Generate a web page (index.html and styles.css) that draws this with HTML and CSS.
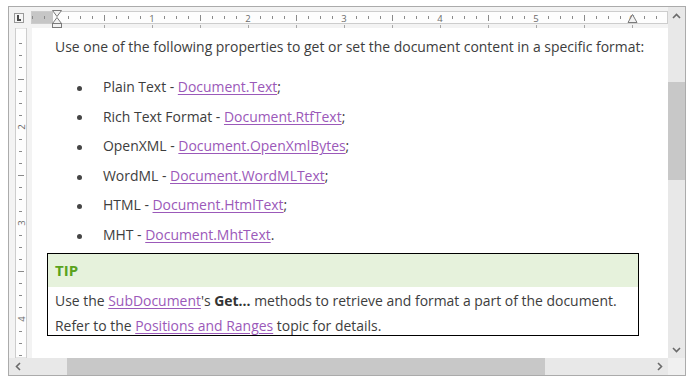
FILE: index.html
```html
<!DOCTYPE html>
<html lang="en">
<head>
<meta charset="UTF-8">
<meta name="viewport" content="width=device-width, initial-scale=1.0">
<link rel="stylesheet" href="styles.css">
<title>Rich Edit Control</title>
</head>
<body>

<div class="editor">

<div class="workspace">

<div class="tabType"><span class="tabL"></span></div>

<svg class="hRuler" width="637" height="21" viewBox="0 0 637 21">
  <defs>
    <pattern id="hTicks" patternUnits="userSpaceOnUse" x="25" y="0" width="96" height="21">
      <g stroke="#8a8a8a" stroke-width="1">
        <line x1="12.5" y1="9" x2="12.5" y2="12"/>
        <line x1="24.5" y1="9" x2="24.5" y2="12"/>
        <line x1="36.5" y1="9" x2="36.5" y2="12"/>
        <line x1="48.5" y1="8" x2="48.5" y2="14"/>
        <line x1="60.5" y1="9" x2="60.5" y2="12"/>
        <line x1="72.5" y1="9" x2="72.5" y2="12"/>
        <line x1="84.5" y1="9" x2="84.5" y2="12"/>
      </g>
      <g stroke="#a8a8a8" stroke-width="1">
        <line x1="0.5" y1="18" x2="0.5" y2="21"/>
        <line x1="48.5" y1="18" x2="48.5" y2="21"/>
      </g>
    </pattern>
  </defs>
  <rect x="0.5" y="4.5" width="636" height="12" fill="#fdfdfd" stroke="#cdcdcd"/>
  <rect x="1" y="5" width="21" height="11" fill="#c6c6c6"/>
  <rect x="0" y="0" width="637" height="21" fill="url(#hTicks)"/>
  <g class="rulerNum" text-anchor="middle">
    <text x="121" y="15">1</text>
    <text x="217" y="15">2</text>
    <text x="313" y="15">3</text>
    <text x="409" y="15">4</text>
    <text x="505" y="15">5</text>
    <text x="601" y="15">6</text>
  </g>
  <g fill="#f2f2f2" stroke="#7a7a7a" stroke-width="1">
    <path d="M21.5 3.5 H30.5 L26 9.5 Z"/>
    <path d="M26 10.5 L30.5 16.5 H21.5 Z"/>
    <rect x="21.5" y="16.5" width="9" height="4"/>
    <path d="M601.5 7.5 L606 15.5 H597 Z"/>
  </g>
</svg>

<svg class="vRuler" width="12" height="330" viewBox="0 0 12 330">
  <defs>
    <pattern id="vTicks" patternUnits="userSpaceOnUse" x="0" y="3" width="12" height="96">
      <g stroke="#8a8a8a" stroke-width="1">
        <line x1="4" y1="12.5" x2="7" y2="12.5"/>
        <line x1="4" y1="24.5" x2="7" y2="24.5"/>
        <line x1="4" y1="36.5" x2="7" y2="36.5"/>
        <line x1="3" y1="48.5" x2="9" y2="48.5"/>
        <line x1="4" y1="60.5" x2="7" y2="60.5"/>
        <line x1="4" y1="72.5" x2="7" y2="72.5"/>
        <line x1="4" y1="84.5" x2="7" y2="84.5"/>
      </g>
    </pattern>
  </defs>
  <rect x="0.5" y="0" width="11" height="330" fill="#fdfdfd" stroke="#cdcdcd"/>
  <rect x="1" y="0" width="10" height="330" fill="url(#vTicks)"/>
  <g class="rulerNum" text-anchor="middle">
    <text transform="translate(9.5 99) rotate(-90)">2</text>
    <text transform="translate(9.5 195) rotate(-90)">3</text>
    <text transform="translate(9.5 291) rotate(-90)">4</text>
  </g>
</svg>

<div class="page">

<p class="lead">Use one of the following properties to get or set the document content in a specific format:</p>

<ul class="formatList">
  <li>Plain Text - <a href="#">Document.Text</a>;</li>
  <li>Rich Text Format - <a href="#">Document.RtfText</a>;</li>
  <li>OpenXML - <a href="#">Document.OpenXmlBytes</a>;</li>
  <li>WordML - <a href="#">Document.WordMLText</a>;</li>
  <li>HTML - <a href="#">Document.HtmlText</a>;</li>
  <li>MHT - <a href="#">Document.MhtText</a>.</li>
</ul>

<div class="tip">
  <div class="tipHead">TIP</div>
  <div class="tipBody">
    Use the <a href="#">SubDocument</a>'s <b>Get...</b> methods to retrieve and format a part of the document.<br>
    Refer to the <a href="#">Positions and Ranges</a> topic for details.
  </div>
</div>

</div>

</div>

<div class="vScroll">
  <span class="arrow">
    <svg width="9" height="6" viewBox="0 0 9 6"><polyline points="1,5 4.5,1.5 8,5" fill="none" stroke="#6a6a6a" stroke-width="1.6"/></svg>
  </span>
  <div class="track"><div class="thumb"></div></div>
  <span class="arrow">
    <svg width="9" height="6" viewBox="0 0 9 6"><polyline points="1,1 4.5,4.5 8,1" fill="none" stroke="#6a6a6a" stroke-width="1.6"/></svg>
  </span>
</div>

<div class="hScroll">
  <span class="arrow">
    <svg width="6" height="9" viewBox="0 0 6 9"><polyline points="5,1 1.5,4.5 5,8" fill="none" stroke="#6a6a6a" stroke-width="1.6"/></svg>
  </span>
  <div class="track"><div class="thumb"></div></div>
  <span class="arrow">
    <svg width="6" height="9" viewBox="0 0 6 9"><polyline points="1,1 4.5,4.5 1,8" fill="none" stroke="#6a6a6a" stroke-width="1.6"/></svg>
  </span>
</div>

<div class="sizeGrip"></div>

</div>

</body>
</html>
```

FILE: styles.css
```css
*,*:before,*:after{
margin: 0;
padding: 0;
box-sizing: border-box;
}

html{
background: #ffffff;
}

body{
margin: 6px 8px;
font-family: "Open Sans", "Noto Sans", sans-serif;
color: #3d3d3d;
}

a{
color: #9b59b9;
text-decoration: underline;
text-underline-offset: 2px;
}

ul{
list-style-type: none;
}



.editor{
width: 678px;
height: 370px;
display: grid;
grid-template-columns: 659px 17px;
grid-template-rows: 351px 17px;
border: 1px solid #ababab;
background: #f3f3f3;
box-shadow: 1px 1px 2px rgba(0,0,0,.22);
}

.workspace{
display: grid;
grid-template-columns: 23px 636px;
grid-template-rows: 21px 330px;
}



.tabType{
padding: 6px 0 0 5px;
}

.tabL{
display: block;
width: 10px;
height: 10px;
border: 1px solid #9a9a9a;
background: #f6f6f6;
position: relative;
}

.tabL:before{
content: "";
position: absolute;
left: 2px;
top: 1px;
width: 4px;
height: 6px;
border-left: 2px solid #4a4a4a;
border-bottom: 2px solid #4a4a4a;
}

.hRuler{
display: block;
margin-left: -1px;
}

.vRuler{
display: block;
margin-left: 6px;
}

.rulerNum{
font-family: "Open Sans", sans-serif;
font-size: 9.5px;
fill: #6b6b6b;
}



.page{
background: #ffffff;
padding: 9px 0 0 23px;
font-size: 13.95px;
overflow: hidden;
}

.lead{
line-height: 20px;
}

.formatList{
margin-top: 15px;
}

.formatList li{
line-height: 29.6px;
padding-left: 48px;
}

.formatList li:before{
content: "";
display: inline-block;
width: 5px;
height: 5px;
margin-left: -26px;
margin-right: 21px;
border-radius: 50%;
background: #454545;
vertical-align: middle;
}

.tip{
width: 592px;
margin: 3px 0 0 -8px;
border: 1px solid #000000;
}

.tipHead{
height: 33px;
line-height: 33px;
padding-left: 7px;
background: #e6f2dc;
color: #5aa31c;
font-weight: 700;
font-size: 15px;
}

.tipBody{
height: 48px;
padding: 1px 7px 0;
line-height: 25px;
}

.tipBody b{
color: #333;
}



.vScroll{
display: flex;
flex-direction: column;
background: #e8e8e8;
}

.hScroll{
display: flex;
background: #e8e8e8;
}

.arrow{
flex: 0 0 17px;
height: 17px;
display: flex;
align-items: center;
justify-content: center;
}

.track{
flex: 1;
}

.vScroll .thumb{
margin-top: 58px;
height: 98px;
background: #c8c8c8;
}

.hScroll .thumb{
margin-left: 41px;
width: 478px;
height: 100%;
background: #c8c8c8;
}

.sizeGrip{
background: #f0f0f0;
}
```
